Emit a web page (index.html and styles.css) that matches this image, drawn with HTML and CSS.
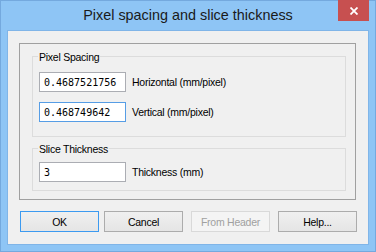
FILE: index.html
```html
<!DOCTYPE html>
<html lang="en">
<head>
  <meta charset="UTF-8" />
  <title>Pixel spacing and slice thickness</title>
  <link rel="stylesheet" href="styles.css">
</head>
<body>
  <!-- Dialog window -->
  <div class="window">
    <div class="titlebar">Pixel spacing and slice thickness</div>
    <button class="close-btn" aria-label="Close">
      <svg width="8" height="8" viewBox="0 0 8 8"><path d="M0.5 0.5 L7.5 7.5 M7.5 0.5 L0.5 7.5" stroke="#fff" stroke-width="1.8" /></svg>
    </button>

    <div class="client">
      <div class="frame">
        <div class="group group-spacing">
          <div class="group-title">Pixel Spacing</div>
          <div class="row row-first">
            <input class="field" type="text" value="0.4687521756" />
            <span class="field-label">Horizontal (mm/pixel)</span>
          </div>
          <div class="row row-next">
            <input class="field focused" type="text" value="0.468749642" />
            <span class="field-label">Vertical (mm/pixel)</span>
          </div>
        </div>

        <div class="group group-thickness">
          <div class="group-title">Slice Thickness</div>
          <div class="row row-single">
            <input class="field" type="text" value="3" />
            <span class="field-label">Thickness (mm)</span>
          </div>
        </div>
      </div>

      <div class="buttons">
        <button class="btn btn-default">OK</button>
        <button class="btn btn-cancel">Cancel</button>
        <button class="btn" disabled>From Header</button>
        <button class="btn">Help...</button>
      </div>
    </div>
  </div>
</body>
</html>
```

FILE: styles.css
```css
/* Reset and base */
* {
  box-sizing: border-box;
}
body {
  margin: 0;
  font-family: 'Liberation Sans', Arial, sans-serif;
  font-size: 10.5px;
  letter-spacing: -0.25px;
  color: #000;
}

/* Window frame */
.window {
  position: relative;
  width: 376px;
  height: 252px;
  background: #8ec5f5;
  border: 1px solid #74a9de;
  padding: 0 6px 6px 6px;
}

.titlebar {
  height: 29px;
  line-height: 28px;
  text-align: center;
  font-size: 14.4px;
  letter-spacing: 0;
  color: #1a1a1a;
}

/* Caption close button */
.close-btn {
  position: absolute;
  top: -1px;
  right: 6px;
  width: 31px;
  height: 21px;
  padding: 0;
  border: none;
  background: #c75050;
  display: flex;
  justify-content: center;
  align-items: center;
}

/* Client area */
.client {
  height: 215px;
  background: #f0f0f0;
  border: 1px solid #80b5e8;
}

.frame {
  margin: 12px 12px 0 11px;
  height: 157px;
  border: 1px solid #a0a0a0;
  padding: 0 9px 8px 12px;
}

/* Group boxes */
.group {
  border: 1px solid #dcdcdc;
}
.group-spacing {
  margin-top: 12px;
  height: 81px;
}
.group-thickness {
  margin-top: 11px;
  height: 43px;
}

.group-title {
  width: fit-content;
  margin: -7px 0 0 5px;
  padding: 0 1px;
  line-height: 14px;
  background: #f0f0f0;
  color: #000;
}

.row {
  display: flex;
  align-items: center;
  margin-left: 6px;
}
.row-first {
  margin-top: 8px;
}
.row-next {
  margin-top: 10px;
}
.row-single {
  margin-top: 6px;
}

.field {
  width: 87px;
  height: 20px;
  margin: 0;
  padding: 0 4px;
  border: 1px solid #abadb3;
  background: #fff;
  font-family: 'DejaVu Sans Mono', monospace;
  font-size: 10px;
  letter-spacing: 0;
  color: #000;
  outline: none;
}
.field.focused {
  border-color: #569de5;
}

.field-label {
  margin-left: 6px;
}

/* Dialog buttons */
.buttons {
  display: flex;
  margin: 11px 0 0 12px;
}

.btn {
  width: 79px;
  height: 21px;
  margin: 0 0 0 8px;
  padding: 0;
  border: 1px solid #acacac;
  background: linear-gradient(#f0f0f0, #e5e5e5);
  font-family: inherit;
  font-size: 10.5px;
  letter-spacing: -0.25px;
  color: #000;
}
.btn-default {
  margin-left: 0;
  border-color: #3c9af0;
}
.btn-cancel {
  margin-left: 5px;
}
.btn:disabled {
  border-color: #d9d9d9;
  background: #f4f4f4;
  color: #a0a0a0;
}
```
